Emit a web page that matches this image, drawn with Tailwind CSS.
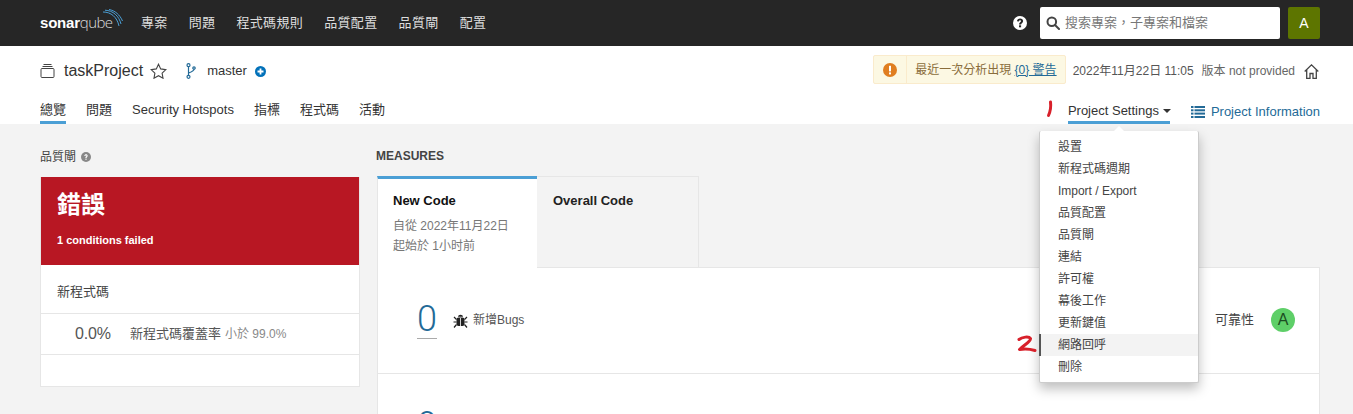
<!DOCTYPE html>
<html lang="zh-Hant">
<head>
    <meta charset="UTF-8">
    <title>taskProject</title>
    <script src="https://cdn.jsdelivr.net/npm/@tailwindcss/browser@4"></script>
</head>
<body class="h-[414px] overflow-hidden bg-[#f3f3f3] font-['Liberation_Sans','Noto_Sans_CJK_TC',sans-serif] text-[13px] text-[#444]">
    <!-- top nav -->
    <nav class="h-[46px] bg-[#262626] flex items-center pl-[40px] pr-[33px]">
        <a class="relative flex items-baseline w-[101px] text-[15px] leading-none text-white -mt-[2px]">
            <span class="font-bold tracking-[-0.2px]">sonar</span><span class="font-['Open_Sans'] font-light text-[#ddd] tracking-[-0.6px]">qube</span>
            <svg class="absolute left-[63px] -top-[6px]" width="20" height="18" viewBox="0 0 20 18" fill="none" stroke="#4b9fd5" stroke-width="1">
                <path d="M0 3C8 3 14 8 16 17"/>
                <path d="M2 1.200C10 1.500 16 7 18 15"/>
                <path d="M6 .5C12 1.500 17 6 19.500 12"/>
            </svg>
        </a>
        <div class="flex gap-[21px] text-[#ddd] tracking-[0.35px]">
            <a>專案</a><a>問題</a><a>程式碼規則</a><a>品質配置</a><a>品質閘</a><a>配置</a>
        </div>
        <svg class="ml-auto" width="14" height="14" viewBox="0 0 14 14">
            <circle cx="7" cy="7" r="7" fill="#fff"/>
            <path d="M4 5.300C4.100 3.500 5.400 2.500 7.100 2.500C8.900 2.500 10.100 3.600 10.100 5C10.100 7 8.100 7 8.100 8.600H6C6 6.200 8 6.200 8 5.200C8 4.700 7.600 4.300 7 4.300C6.400 4.300 6 4.700 5.900 5.500Z" fill="#262626"/>
            <rect x="6" y="9.300" width="2.100" height="2" fill="#262626"/>
        </svg>
        <div class="ml-[13px] w-[240px] h-[32px] bg-white rounded-[2px] flex items-center pl-[6px] text-[#777]">
            <svg width="14" height="14" viewBox="0 0 14 14" fill="none" stroke="#444" stroke-width="2">
                <circle cx="5.800" cy="5.800" r="4.300"/>
                <path d="M9 9l4 4" stroke-linecap="round"/>
            </svg>
            <span class="ml-[5px]">搜索專案，子專案和檔案</span>
        </div>
        <div class="ml-[8px] w-[32px] h-[32px] bg-[#5d7500] rounded-[2px] flex items-center justify-center text-white text-[14px]">A</div>
    </nav>

    <!-- project header -->
    <header class="h-[78px] bg-white pl-[40px] pr-[33px] flex flex-col">
        <div class="h-[50px] flex items-center">
            <svg width="15" height="14" viewBox="0 0 15 14" fill="none" stroke="#444" stroke-width="1">
                <rect x="1" y="4.500" width="13" height="9" rx="1"/>
                <path d="M2.500 2.500h10M3.500 .5h8"/>
            </svg>
            <span class="ml-[9px] text-[16px] text-[#333]">taskProject</span>
            <svg class="ml-[7px]" width="17" height="16" viewBox="0 0 17 16" fill="none" stroke="#444" stroke-width="1.100">
                <path d="M8.500 1.200l2.200 4.700 5.100.7-3.700 3.500.9 5.100-4.500-2.500-4.500 2.500.9-5.100-3.700-3.500 5.100-.7z"/>
            </svg>
            <svg class="ml-[19px]" width="10" height="16" viewBox="0 0 10 16" fill="none" stroke="#236a97" stroke-width="1.200">
                <circle cx="2.500" cy="2.200" r="1.500"/>
                <circle cx="2.500" cy="13.800" r="1.500"/>
                <circle cx="8" cy="5" r="1.200"/>
                <path d="M2.500 3.700v8.600M2.500 10C5 9 8 8 8 6.200"/>
            </svg>
            <span class="ml-[11px] text-[#333]">master</span>
            <svg class="ml-[8px]" width="11" height="11" viewBox="0 0 11 11">
                <circle cx="5.500" cy="5.500" r="5.500" fill="#0271b9"/>
                <path d="M5.500 2.500v6M2.500 5.500h6" stroke="#fff" stroke-width="1.800"/>
            </svg>
            <div class="ml-auto h-[29px] -mt-[3px] bg-[#fcf8e3] border border-[#faebcc] rounded-[2px] flex items-center text-[#8a6d3b]">
                <div class="w-[33px] h-full border-r border-[#faebcc] flex items-center justify-center">
                    <svg width="14" height="14" viewBox="0 0 14 14">
                        <circle cx="7" cy="7" r="7" fill="#e07e20"/>
                        <rect x="6" y="2.800" width="2" height="5.600" fill="#fff"/>
                        <rect x="6" y="9.400" width="2" height="2" fill="#fff"/>
                    </svg>
                </div>
                <span class="ml-[8px] mr-[8px] text-[12px]">最近一次分析出現 <a class="text-[#236a97] underline">{0} 警告</a></span>
            </div>
            <span class="ml-[7px] text-[12px] text-[#555]">2022年11月22日 11:05</span>
            <span class="ml-[8px] text-[12px] text-[#666]">版本 not provided</span>
            <svg class="ml-[9px] mr-[1px]" width="15" height="15" viewBox="0 0 15 15" fill="none" stroke="#444" stroke-width="1.300">
                <path d="M.7 7.500L7.500 .9l6.800 6.600M2.700 6v8.300h3.300V9.500h3v4.800h3.300V6"/>
            </svg>
        </div>
        <div class="flex-1 flex items-stretch">
            <a class="flex items-center pt-[3px] border-b-[3px] border-[#4b9fd5] h-[28px] text-[#333]">總覽</a>
            <a class="ml-[20px] h-[28px] flex items-center py-[3px] text-[#333]">問題</a>
            <a class="ml-[20px] h-[28px] flex items-center py-[3px] text-[#333]">Security Hotspots</a>
            <a class="ml-[20px] h-[28px] flex items-center py-[3px] text-[#333]">指標</a>
            <a class="ml-[20px] h-[28px] flex items-center py-[3px] text-[#333]">程式碼</a>
            <a class="ml-[20px] h-[28px] flex items-center py-[3px] text-[#333]">活動</a>

            <!-- project settings + menu -->
            <div class="relative ml-auto">
                <svg class="absolute -left-[23px] top-[4px]" width="8" height="18" viewBox="0 0 8 18" fill="none" stroke="#d8202a" stroke-width="3" stroke-linecap="round">
                    <path d="M5.500 2C6 6 5.500 11 3.500 15.500"/>
                </svg>
                <a class="flex items-center gap-[4px] h-[28px] w-[102px] pt-[5px] border-b-[3px] border-[#4b9fd5] text-[#333] whitespace-nowrap">
                    Project Settings
                    <span class="w-0 h-0 border-x-[4px] border-x-transparent border-t-[4px] border-t-[#333]"></span>
                </a>
                <div class="absolute left-[-29px] top-[35px] w-[160px] z-10 bg-white rounded-[2px] shadow-[0_6px_12px_rgba(0,0,0,0.25)] border border-[#ccc] border-t-0 pt-[5px] pb-[4px] text-[12px] text-[#444]">
                    <span class="absolute left-[73px] -top-[5px] w-0 h-0 border-x-[6px] border-x-transparent border-b-[6px] border-b-white"></span>
                    <a class="flex items-center h-[22px] pl-[18px]">設置</a>
                    <a class="flex items-center h-[22px] pl-[18px]">新程式碼週期</a>
                    <a class="flex items-center h-[22px] pl-[18px]">Import / Export</a>
                    <a class="flex items-center h-[22px] pl-[18px]">品質配置</a>
                    <a class="flex items-center h-[22px] pl-[18px]">品質閘</a>
                    <a class="flex items-center h-[22px] pl-[18px]">連結</a>
                    <a class="flex items-center h-[22px] pl-[18px]">許可權</a>
                    <a class="flex items-center h-[22px] pl-[18px]">幕後工作</a>
                    <a class="flex items-center h-[22px] pl-[18px]">更新鍵值</a>
                    <a class="flex items-center h-[22px] -ml-px pl-[17px] bg-[#f3f3f3] border-l-2 border-[#555]">網路回呼</a>
                    <a class="flex items-center h-[22px] pl-[18px]">刪除</a>
                    <svg class="absolute -left-[23px] top-[204px]" width="20" height="18" viewBox="0 0 20 18" fill="none" stroke="#d8202a" stroke-width="3" stroke-linecap="round" stroke-linejoin="round">
                        <path d="M2 4.500C5 2 12 1 13.500 3.500C14 6.500 7 10 2.500 14.500C8 13.500 13 14 18 15.500"/>
                    </svg>
                </div>
            </div>
            <a class="ml-[21px] h-[28px] flex items-center pt-[4px] text-[#236a97] whitespace-nowrap">
                <svg class="mr-[6px]" width="14" height="12" viewBox="0 0 14 12" fill="#236a97">
                    <rect x="0" y="0" width="2.500" height="2"/><rect x="3.500" y="0" width="10.500" height="2"/>
                    <rect x="0" y="3.300" width="2.500" height="2"/><rect x="3.500" y="3.300" width="10.500" height="2"/>
                    <rect x="0" y="6.600" width="2.500" height="2"/><rect x="3.500" y="6.600" width="10.500" height="2"/>
                    <rect x="0" y="10" width="2.500" height="2"/><rect x="3.500" y="10" width="10.500" height="2"/>
                </svg>
                Project Information
            </a>
        </div>
    </header>

    <!-- dashboard -->
    <main class="flex pl-[40px] pr-[33px] pt-[25px] items-start">
        <section class="w-[320px] shrink-0">
            <h3 class="h-[14px] pt-[2px] flex items-center text-[12px] text-[#444] font-normal">
                品質閘
                <svg class="ml-[5px]" width="10" height="10" viewBox="0 0 10 10">
                    <circle cx="5" cy="5" r="5" fill="#888"/>
                    <path d="M3.300 3.900C3.400 2.800 4.100 2.200 5 2.200C6 2.200 6.700 2.900 6.700 3.700C6.700 4.900 5.600 4.900 5.600 6H4.400C4.400 4.500 5.500 4.500 5.500 3.800C5.500 3.500 5.300 3.300 5 3.300C4.700 3.300 4.500 3.500 4.400 4Z" fill="#fff"/>
                    <rect x="4.400" y="6.600" width="1.200" height="1.200" fill="#fff"/>
                </svg>
            </h3>
            <div class="mt-[14px] h-[210px] bg-white border border-[#e6e6e6]">
                <div class="h-[88px] -mt-px bg-[#b81723] text-white pl-[16px] pt-[14px]">
                    <div class="text-[24px] font-bold leading-[28px]">錯誤</div>
                    <div class="mt-[13px] text-[11px] font-bold leading-[16px]">1 conditions failed</div>
                </div>
                <div class="h-[49px] pl-[16px] pt-[6px] flex items-center border-b border-[#e6e6e6] text-[#444]">新程式碼</div>
                <div class="h-[41px] flex items-center border-b border-[#e6e6e6]">
                    <span class="ml-[34px] w-[36px] text-[16px] text-[#555] tracking-[-0.2px]">0.0%</span>
                    <span class="ml-[19px] text-[13px] text-[#555]">新程式碼覆蓋率</span>
                    <span class="ml-[4px] text-[12px] text-[#888]">小於 99.0%</span>
                </div>
            </div>
        </section>

        <section class="ml-[17px] flex-1">
            <h3 class="h-[14px] flex items-center -ml-px text-[12px] font-bold text-[#444]">MEASURES</h3>
            <div class="mt-[13px] flex h-[92px]">
                <div class="w-[160px] bg-white border-t-[3px] border-[#4b9fd5] border-l border-l-[#e6e6e6] pl-[15px] pt-[14px] relative z-[1] h-[92px]">
                    <div class="font-bold text-[#111] leading-[16px]">New Code</div>
                    <div class="mt-[7px] text-[12px] leading-[20px] text-[#777]">自從 2022年11月22日<br>起始於 1小时前</div>
                </div>
                <div class="w-[162px] bg-[#f3f3f3] border border-[#e6e6e6] border-l-0 pl-[16px] pt-[16px]">
                    <div class="font-bold text-[#222] leading-[16px]">Overall Code</div>
                </div>
            </div>
            <div class="bg-white border border-[#e6e6e6] -mt-px h-[200px]">
                <div class="h-[106px] flex items-center border-b border-[#e6e6e6]">
                    <div class="ml-[39px] w-[20px] text-center border-b border-[#aaa] font-['Roboto'] text-[36px] leading-[38px] font-light text-[#236a97] -mt-[2px]">0</div>
                    <svg class="ml-[16px] -mt-[1px]" width="15" height="15" viewBox="0 0 15 15" fill="#222">
                        <rect x="3.500" y="4.500" width="8" height="8.500" rx="2"/>
                        <path d="M5 3.700C5 1 10 1 10 3.700Z"/>
                        <path d="M1 4l2.500 2.500M14 4l-2.500 2.500M.5 9h3M14.500 9h-3M1 14.500l2.500-3M14 14.500l-2.500-3" stroke="#222" stroke-width="1.200" fill="none"/>
                        <path d="M7.500 5v8" stroke="#fff" stroke-width=".8"/>
                    </svg>
                    <span class="ml-[5px] -mt-[1px] text-[12px] text-[#555]">新增Bugs</span>
                    <span class="ml-auto -mt-[1px] text-[13px] text-[#444]">可靠性</span>
                    <span class="ml-[17px] mr-[24px] -mt-[1px] w-[24px] h-[24px] rounded-full bg-[#5ecf68] flex items-center justify-center text-[16px] text-[#1c4d22]">A</span>
                </div>
                <div class="ml-[39px] mt-[32px] w-[20px] text-center font-['Roboto'] text-[36px] leading-[38px] font-light text-[#236a97]">0</div>
            </div>
        </section>
    </main>
</body>
</html>
